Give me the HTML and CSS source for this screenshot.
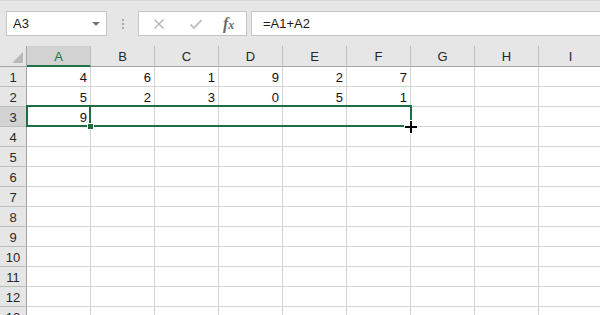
FILE: index.html
```html
<!DOCTYPE html>
<html lang="en">
<head>
  <meta charset="UTF-8">
  <title>Book1 - Excel</title>
  <link rel="stylesheet" href="styles.css">
</head>
<body>
  <div class="toolbar">
    <div class="namebox">
      <span>A3</span>
      <span class="caret"></span>
    </div>
    <div class="grip"><i></i><i></i><i></i></div>
    <div class="fx-buttons">
      <svg class="btn" width="12" height="12" viewBox="0 0 12 12"><path d="M1.5 1.5 L10.5 10.5 M10.5 1.5 L1.5 10.5" stroke="#b4b4b4" stroke-width="1.4" fill="none"/></svg>
      <svg class="btn" width="14" height="12" viewBox="0 0 14 12"><path d="M1.5 6.5 L5 10 L12.5 2" stroke="#c4c4c4" stroke-width="2" fill="none"/></svg>
      <span class="fx">f<small>x</small></span>
    </div>
    <div class="formula">=A1+A2</div>
  </div>

  <div class="sheet">
    <div class="grid">
      <div class="corner"><span class="tri"></span></div>
      <div class="colhead active">A</div>
      <div class="colhead">B</div>
      <div class="colhead">C</div>
      <div class="colhead">D</div>
      <div class="colhead">E</div>
      <div class="colhead">F</div>
      <div class="colhead">G</div>
      <div class="colhead">H</div>
      <div class="colhead">I</div>

      <div class="rowhead">1</div>
      <div class="cell">4</div><div class="cell">6</div><div class="cell">1</div><div class="cell">9</div><div class="cell">2</div><div class="cell">7</div><div class="cell"></div><div class="cell"></div><div class="cell"></div>

      <div class="rowhead">2</div>
      <div class="cell">5</div><div class="cell">2</div><div class="cell">3</div><div class="cell">0</div><div class="cell">5</div><div class="cell">1</div><div class="cell"></div><div class="cell"></div><div class="cell"></div>

      <div class="rowhead active">3</div>
      <div class="cell">9</div><div class="cell"></div><div class="cell"></div><div class="cell"></div><div class="cell"></div><div class="cell"></div><div class="cell"></div><div class="cell"></div><div class="cell"></div>

      <div class="rowhead">4</div>
      <div class="cell"></div><div class="cell"></div><div class="cell"></div><div class="cell"></div><div class="cell"></div><div class="cell"></div><div class="cell"></div><div class="cell"></div><div class="cell"></div>

      <div class="rowhead">5</div>
      <div class="cell"></div><div class="cell"></div><div class="cell"></div><div class="cell"></div><div class="cell"></div><div class="cell"></div><div class="cell"></div><div class="cell"></div><div class="cell"></div>

      <div class="rowhead">6</div>
      <div class="cell"></div><div class="cell"></div><div class="cell"></div><div class="cell"></div><div class="cell"></div><div class="cell"></div><div class="cell"></div><div class="cell"></div><div class="cell"></div>

      <div class="rowhead">7</div>
      <div class="cell"></div><div class="cell"></div><div class="cell"></div><div class="cell"></div><div class="cell"></div><div class="cell"></div><div class="cell"></div><div class="cell"></div><div class="cell"></div>

      <div class="rowhead">8</div>
      <div class="cell"></div><div class="cell"></div><div class="cell"></div><div class="cell"></div><div class="cell"></div><div class="cell"></div><div class="cell"></div><div class="cell"></div><div class="cell"></div>

      <div class="rowhead">9</div>
      <div class="cell"></div><div class="cell"></div><div class="cell"></div><div class="cell"></div><div class="cell"></div><div class="cell"></div><div class="cell"></div><div class="cell"></div><div class="cell"></div>

      <div class="rowhead">10</div>
      <div class="cell"></div><div class="cell"></div><div class="cell"></div><div class="cell"></div><div class="cell"></div><div class="cell"></div><div class="cell"></div><div class="cell"></div><div class="cell"></div>

      <div class="rowhead">11</div>
      <div class="cell"></div><div class="cell"></div><div class="cell"></div><div class="cell"></div><div class="cell"></div><div class="cell"></div><div class="cell"></div><div class="cell"></div><div class="cell"></div>

      <div class="rowhead">12</div>
      <div class="cell"></div><div class="cell"></div><div class="cell"></div><div class="cell"></div><div class="cell"></div><div class="cell"></div><div class="cell"></div><div class="cell"></div><div class="cell"></div>

      <div class="rowhead">13</div>
      <div class="cell"></div><div class="cell"></div><div class="cell"></div><div class="cell"></div><div class="cell"></div><div class="cell"></div><div class="cell"></div><div class="cell"></div><div class="cell"></div>
    </div>

    <!-- fill range A3:F3 being dragged -->
    <div class="selection"></div>
    <div class="active-edge"></div>
    <div class="fill-handle"></div>
    <svg class="cursor" width="18" height="18" viewBox="0 0 18 18">
      <path d="M9 2 V16 M2 9 H16" stroke="#fff" stroke-width="4" fill="none"/>
      <path d="M9 3 V15 M3 9 H15" stroke="#000" stroke-width="2" fill="none"/>
    </svg>
  </div>
</body>
</html>
```

FILE: styles.css
```css
body {
  margin: 0;
  width: 600px;
  height: 315px;
  overflow: hidden;
  background: #fff;
  font-family: "Liberation Sans", Arial, sans-serif;
  color: #1a1a1a;
}

.toolbar {
  display: flex;
  align-items: flex-start;
  height: 46px;
  box-sizing: border-box;
  padding: 11px 0 0 6px;
  background: #e6e6e6;
  border-top: 1px solid #d8d8d8;
}
.namebox {
  display: flex;
  align-items: center;
  justify-content: space-between;
  width: 101px;
  height: 25px;
  box-sizing: border-box;
  padding: 0 6px;
  margin-top: -1px;
  background: #fff;
  border: 1px solid #c6c6c6;
  font-size: 13px;
}
.caret {
  width: 0;
  height: 0;
  border-left: 4px solid transparent;
  border-right: 4px solid transparent;
  border-top: 4px solid #777;
}
.grip {
  display: flex;
  flex-direction: column;
  align-items: center;
  gap: 2px;
  width: 31px;
  padding-top: 7px;
}
.grip i {
  width: 2px;
  height: 2px;
  background: #a8a8a8;
}
.fx-buttons {
  display: flex;
  align-items: center;
  width: 109px;
  height: 25px;
  box-sizing: border-box;
  margin-top: -1px;
  padding-left: 14px;
  background: #fff;
  border: 1px solid #c6c6c6;
}
.fx-buttons .btn {
  margin-right: 24px;
}
.fx-buttons .btn + .btn {
  margin-right: 20px;
}
.fx {
  font-family: "Liberation Serif", serif;
  font-style: italic;
  font-weight: bold;
  font-size: 16px;
  color: #6a6a6a;
}
.fx small {
  font-size: 12px;
}
.formula {
  flex: 1;
  height: 25px;
  box-sizing: border-box;
  margin: -1px 0 0 4px;
  padding-left: 11px;
  line-height: 23px;
  background: #fff;
  border: 1px solid #c6c6c6;
  border-right: none;
  font-size: 13px;
}

.sheet {
  position: relative;
}
.grid {
  display: grid;
  grid-template-columns: 27px repeat(9, 64px);
  grid-template-rows: 21px;
  grid-auto-rows: 20px;
  font-size: 13px;
}
.grid > div {
  box-sizing: border-box;
  border-right: 1px solid #d4d4d4;
  border-bottom: 1px solid #d4d4d4;
}
.grid .corner {
  position: relative;
  background: #e6e6e6;
  border-right: 1px solid #a5a5a5;
  border-bottom: 1px solid #a5a5a5;
}
.tri {
  position: absolute;
  right: 3px;
  bottom: 3px;
  width: 0;
  height: 0;
  border-left: 11px solid transparent;
  border-bottom: 11px solid #b9b9b9;
}
.grid .colhead {
  background: #e6e6e6;
  border-right: 1px solid #bdbdbd;
  border-bottom: 1px solid #a5a5a5;
  text-align: center;
  line-height: 22px;
  color: #262626;
}
.grid .colhead.active {
  background: #d2d2d2;
  border-bottom: 2px solid #217346;
  color: #217346;
}
.grid .rowhead {
  background: #e6e6e6;
  border-right: 1px solid #a5a5a5;
  border-bottom: 1px solid #bdbdbd;
  text-align: center;
  line-height: 21px;
  color: #262626;
}
.grid .rowhead.active {
  background: #d2d2d2;
}
.cell {
  text-align: right;
  padding-right: 3px;
  line-height: 21px;
  color: #111;
}

.selection {
  position: absolute;
  left: 26px;
  top: 59px;
  width: 386px;
  height: 22px;
  box-sizing: border-box;
  border: 2px solid #1f6e43;
}
.active-edge {
  position: absolute;
  left: 89px;
  top: 60px;
  width: 2px;
  height: 20px;
  background: #1f6e43;
}
.fill-handle {
  position: absolute;
  left: 87px;
  top: 77px;
  width: 5px;
  height: 5px;
  background: #1f6e43;
  border: 1px solid #fff;
}
.cursor {
  position: absolute;
  left: 402px;
  top: 72px;
}
```
